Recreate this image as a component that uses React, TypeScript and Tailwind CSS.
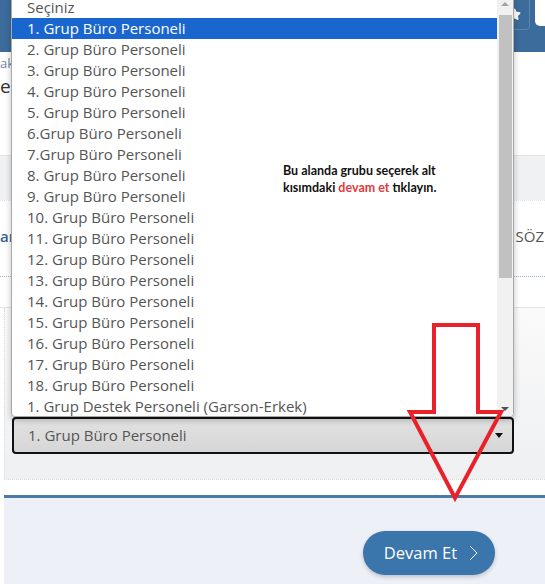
import { Star } from "lucide-react";

const options = [
  "Seçiniz",
  "1. Grup Büro Personeli",
  "2. Grup Büro Personeli",
  "3. Grup Büro Personeli",
  "4. Grup Büro Personeli",
  "5. Grup Büro Personeli",
  "6.Grup Büro Personeli",
  "7.Grup Büro Personeli",
  "8. Grup Büro Personeli",
  "9. Grup Büro Personeli",
  "10. Grup Büro Personeli",
  "11. Grup Büro Personeli",
  "12. Grup Büro Personeli",
  "13. Grup Büro Personeli",
  "14. Grup Büro Personeli",
  "15. Grup Büro Personeli",
  "16. Grup Büro Personeli",
  "17. Grup Büro Personeli",
  "18. Grup Büro Personeli",
  "1. Grup Destek Personeli (Garson-Erkek)",
];

const selected = 1;

const OptionList = () => (
  <div className="absolute left-[11px] top-[-4px] flex h-[421px] w-[503px] overflow-hidden rounded-b-[4px] border border-[#a9a9a9] bg-white shadow-[0_3px_6px_rgba(0,0,0,0.25)]">
    <ul className="flex-1">
      {options.map((label, i) => (
        <li
          key={label}
          className={
            i === selected
              ? "h-[21px] bg-[#1a66cf] pl-[15px] text-[15px] leading-[21px] text-white"
              : "h-[21px] pl-[15px] text-[15px] leading-[21px] text-[#555]"
          }
        >
          {label}
        </li>
      ))}
    </ul>
    <div className="relative flex w-[16px] flex-col items-center bg-[#f1f1f1]">
      <div className="mt-[5px] h-0 w-0 border-x-[4px] border-b-[4px] border-x-transparent border-b-[#a3a3a3]" />
      <div className="mt-[9px] h-[263px] w-[13px] bg-[#c1c1c1]" />
      <div className="absolute bottom-[5px] h-0 w-0 border-x-[4px] border-t-[4px] border-x-transparent border-t-[#505050]" />
    </div>
  </div>
);

const Arrow = () => (
  <svg
    className="pointer-events-none absolute left-0 top-0"
    width="545"
    height="584"
    viewBox="0 0 545 584"
  >
    <polygon
      points="434,325 478,325 478,412 501,412 455,498 410,412 434,412"
      fill="none"
      stroke="#e8212b"
      strokeWidth="4"
      strokeLinejoin="miter"
    />
  </svg>
);

export default function App() {
  return (
    <div className="relative h-[584px] w-[545px] overflow-hidden bg-white font-['Open_Sans',sans-serif]">
      <header className="flex h-[52px] items-start justify-end bg-[#3b6c9c] shadow-[0_2px_6px_rgba(0,0,0,0.15)]">
        <div className="mr-[5px] mt-[-6px] flex h-[36px] w-[32px] items-center justify-center rounded-[4px] border border-[#5b87b2]">
          <Star className="mt-[4px] h-[13px] w-[13px] fill-white text-white" />
        </div>
        <div className="h-[26px] w-[10px] rounded-bl-[5px] bg-white" />
      </header>

      <section className="h-[103px] bg-white pt-[2px]">
        <div className="text-[13px] leading-[18px] text-[#6d88a6]">ak</div>
        <div className="mt-[2px] text-[19px] leading-[24px] text-[#333]">e</div>
      </section>

      <section className="h-[45px] border-t border-[#e2e4e6] bg-[#eff1f3]" />

      <section className="flex h-[77px] items-center justify-between border-t border-[#e6e6e6] border-b border-b-[#9fb5cc] border-dotted bg-white pb-[4px]">
        <span className="text-[15px] font-semibold text-[#34628f]">ar</span>
        <span className="pr-[1px] text-[15px] text-[#555]">SÖZ</span>
      </section>

      <section className="h-[31px] border-b border-[#e5e5e5] bg-white" />

      <section className="ml-[4px] h-[172px] border-b border-l border-dotted border-[#dcdcdc] bg-gradient-to-b from-[#fafafa] to-[#eff0f2] pl-[7px] pr-[31px] pt-[109px]">
        <div className="flex h-[37px] items-center justify-between rounded-[4px] border-2 border-[#111] bg-gradient-to-b from-[#e2e2e2] to-[#d6d6d6] pl-[14px] pr-[9px]">
          <span className="text-[15px] text-[#555]">1. Grup Büro Personeli</span>
          <span className="h-0 w-0 border-x-[4px] border-t-[5px] border-x-transparent border-t-[#111]" />
        </div>
      </section>

      <section className="ml-[4px] h-[15px] bg-white" />

      <footer className="ml-[4px] flex h-[89px] justify-end border-t-[3px] border-[#4b7aa6] bg-[#edf1f7] pr-[50px] pt-[33px]">
        <button className="flex h-[44px] w-[132px] items-center justify-center gap-[12px] rounded-full bg-[#3a75ac] pl-[4px] text-[16.5px] text-white shadow-[0_2px_4px_rgba(0,0,0,0.2)]">
          <span>Devam Et</span>
          <svg width="9" height="16" viewBox="0 0 9 16" fill="none">
            <path d="M1 1l7 7-7 7" stroke="white" strokeWidth="1" />
          </svg>
        </button>
      </footer>

      <OptionList />

      <div className="absolute left-[283px] top-[162px] font-['Lato',sans-serif] text-[12.5px] font-bold leading-[17px] text-[#111]">
        <div>Bu alanda grubu seçerek alt</div>
        <div>
          kısımdaki <span className="text-[#e23b3b]">devam et</span> tıklayın.
        </div>
      </div>

      <Arrow />
    </div>
  );
}
